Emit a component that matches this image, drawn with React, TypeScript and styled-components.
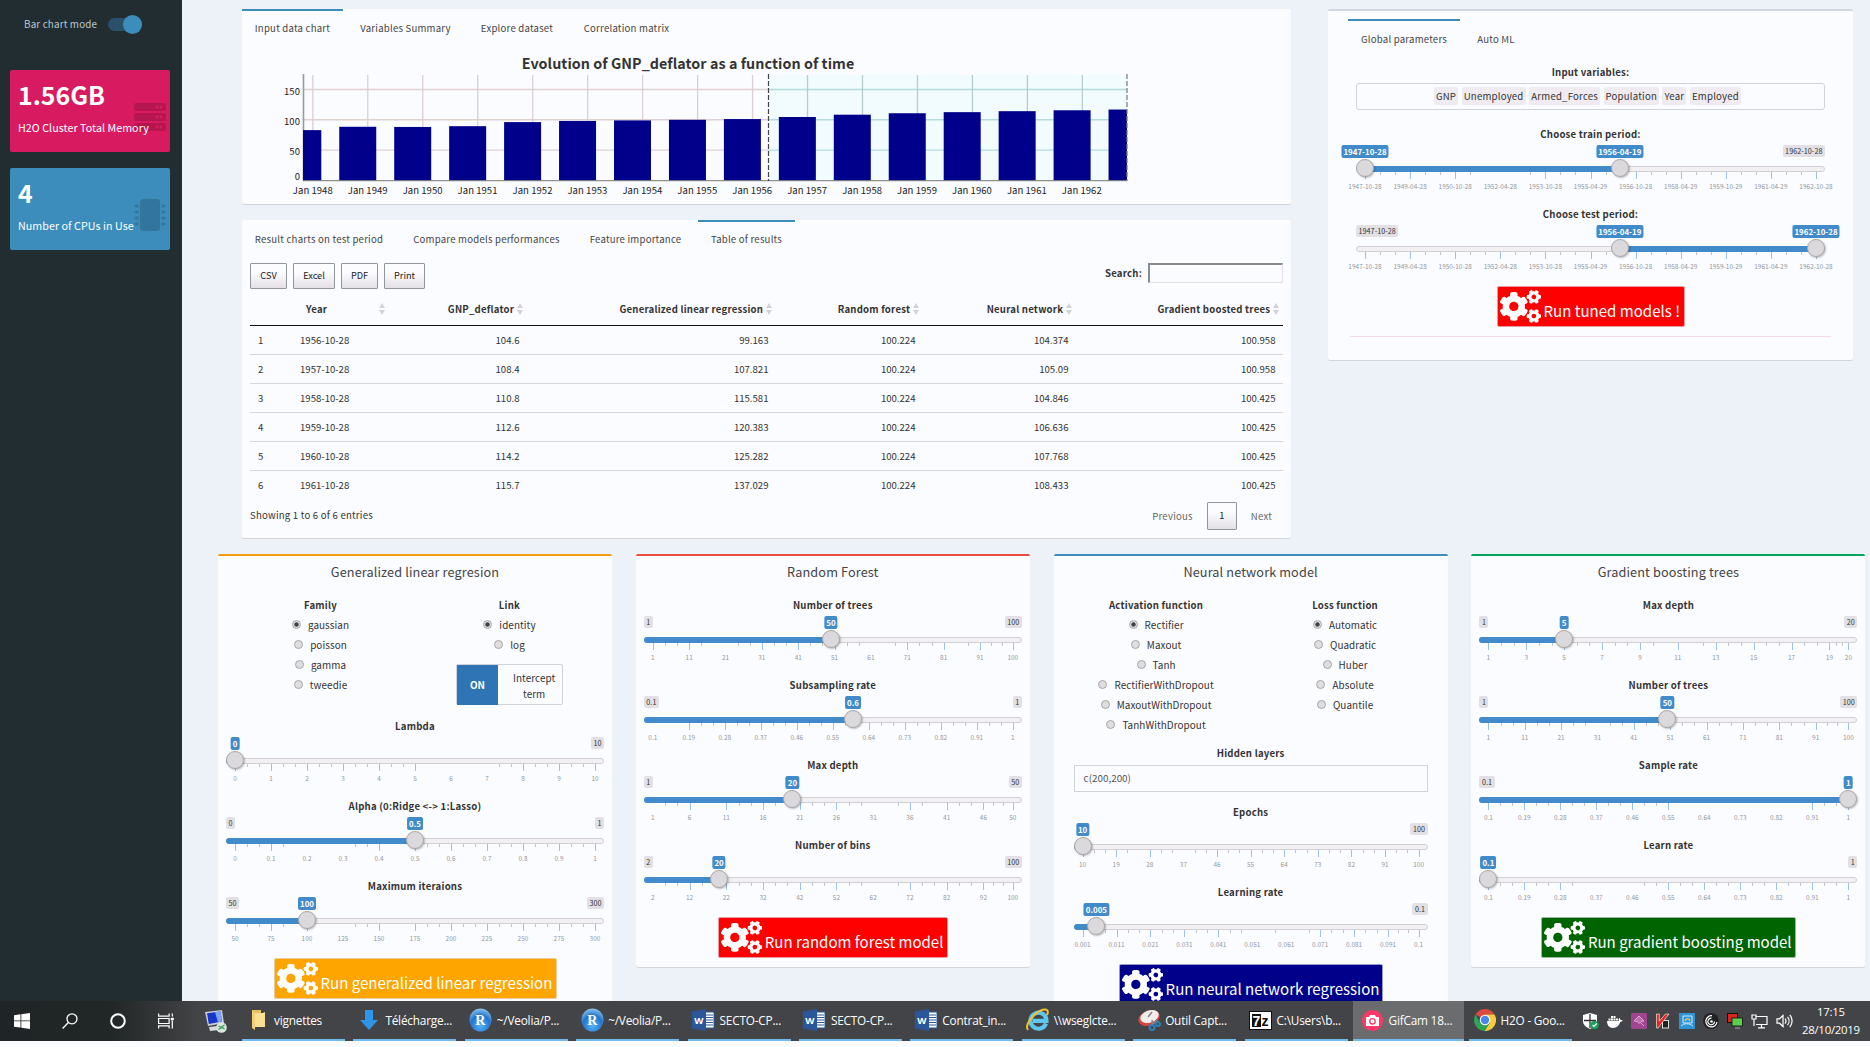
import React from 'react';
import styled, { createGlobalStyle } from 'styled-components';
import { FaCogs, FaServer, FaMicrochip } from 'react-icons/fa';

const sans = `"Noto Sans CJK SC", "Open Sans", sans-serif`;
const ui = `"Open Sans", "Noto Sans", sans-serif`;

const GlobalStyle = createGlobalStyle`
  *, *::before, *::after { box-sizing: border-box; }
  html, body { margin: 0; padding: 0; background: #fbfcff; overflow: hidden; }
  body { font-family: ${sans}; font-size: 9.6px; line-height: 15px; letter-spacing: 0.22px; color: #333; }
`;

const Screen = styled.div`
  width: 1870px;
  height: 1047px;
  overflow: hidden;
  background: #fbfcff;
`;

const Dashboard = styled.div`
  display: flex;
  height: 1001px;
  overflow: hidden;
`;

/* ---------- sidebar ---------- */

const Sidebar = styled.aside`
  width: 182px;
  flex: none;
  background: #222d32;
  padding: 15px 12px 0 10px;
  display: flex;
  flex-direction: column;
`;

const SwitchRow = styled.label`
  display: flex;
  align-items: center;
  height: 19px;
  padding-left: 14px;
  margin-bottom: 36px;
  color: #b8c7ce;
  font-size: 9.9px;
  letter-spacing: 0.14px;
  white-space: nowrap;
`;

const SwitchTrack = styled.span`
  display: flex;
  justify-content: flex-end;
  align-items: center;
  width: 34px;
  height: 13px;
  margin-left: 11px;
  border-radius: 7px;
  background: #2b506a;
`;

const SwitchKnob = styled.span`
  width: 19px;
  height: 19px;
  flex: none;
  border-radius: 50%;
  background: #3c8dbc;
`;

const ValueBox = styled.div<{ $bg: string }>`
  position: relative;
  height: 82px;
  margin-bottom: 16px;
  padding: 6px 8px;
  border-radius: 2px;
  background: ${(p) => p.$bg};
  color: #fff;
`;

const ValueNumber = styled.div`
  font-size: 24.9px;
  font-weight: 700;
  line-height: 36px;
  letter-spacing: 0;
`;

const ValueCaption = styled.div`
  margin-top: 8px;
  font-size: 10.7px;
  letter-spacing: 0.05px;
  white-space: nowrap;
  position: relative;
  z-index: 1;
`;

const ValueIcon = styled.span`
  position: absolute;
  right: 4px;
  bottom: 19px;
  display: flex;
  color: rgba(0, 0, 0, 0.16);
`;

/* ---------- main area ---------- */

const Main = styled.main`
  flex: 1;
  background: #edf1f8;
  padding-top: 9px;
`;

const TopRow = styled.div`
  display: flex;
  align-items: flex-start;
  gap: 37px;
  padding-left: 60px;
  height: 545px;
`;

const LeftColumn = styled.div`
  width: 1049px;
  display: flex;
  flex-direction: column;
  gap: 15px;
`;

const Panel = styled.section<{ $h?: number }>`
  display: flex;
  flex-direction: column;
  height: ${(p) => (p.$h ? `${p.$h}px` : 'auto')};
  background: #fbfcff;
  border-radius: 2px;
  box-shadow: inset 0 -1px 0 #d2d5da;
`;

const TabBar = styled.nav`
  display: flex;
  gap: 4px;
  height: 38px;
  flex: none;
`;

const Tab = styled.a<{ $active?: boolean; $w: number }>`
  width: ${(p) => p.$w}px;
  border-top: 2px solid ${(p) => (p.$active ? '#3c8dbc' : 'transparent')};
  padding-top: 10px;
  text-align: center;
  color: #444;
  white-space: nowrap;
`;

const TableTools = styled.div`
  display: flex;
  justify-content: space-between;
  align-items: flex-start;
  padding: 5px 8px 0;
  height: 37px;
  flex: none;
`;

const ButtonGroup = styled.div`
  display: flex;
  gap: 6px;
`;

const ToolButton = styled.button<{ $w: number; $h: number }>`
  width: ${(p) => p.$w}px;
  height: ${(p) => p.$h}px;
  padding: 0 0 1px;
  border: 1px solid #8f979c;
  border-radius: 1px;
  background: linear-gradient(#fcfcff 35%, #e4e0e6);
  font: 400 9.2px/15px ${sans};
  color: #222;
`;

const SearchLabel = styled.label`
  display: flex;
  align-items: center;
  gap: 6px;
  font-weight: 700;
`;

const SearchInput = styled.input`
  width: 135px;
  height: 20px;
  border: 1px solid #e3dfe8;
  border-top: 2px solid #858d90;
  border-left: 2px solid #858d90;
  background: #fbfcff;
`;

const Table = styled.table`
  width: 1033px;
  margin-left: 8px;
  table-layout: fixed;
  border-collapse: separate;
  border-spacing: 0;
`;

const Th = styled.th<{ $left?: boolean }>`
  position: relative;
  height: 31px;
  padding: 0 12.8px 2px 14px;
  text-align: ${(p) => (p.$left ? 'left' : 'right')};
  font-weight: 700;
  white-space: nowrap;
  border-bottom: 1px solid #111;
`;

const SortMark = styled.svg`
  position: absolute;
  right: 4.5px;
  top: 8px;
  width: 6px;
  height: 12px;
  fill: #d2d3d9;
`;

const Td = styled.td<{ $left?: boolean; $last?: boolean }>`
  height: 29px;
  padding: 0 7.5px 0 8px;
  letter-spacing: 0;
  text-align: ${(p) => (p.$left ? 'left' : 'right')};
  border-bottom: 1px solid ${(p) => (p.$last ? 'transparent' : '#d8d6db')};
`;

const TableFooter = styled.div`
  display: flex;
  justify-content: space-between;
  padding: 2px 8px 0;
  color: #333;
  line-height: 27px;
`;

const Pager = styled.div`
  display: flex;
  gap: 14px;
  padding-right: 11px;
  color: #666;
  line-height: 28px;
`;

/* ---------- parameter panel ---------- */

const ParamPanel = styled.section`
  width: 525px;
  height: 352px;
  padding: 8px 20px 0;
  background: #fbfcff;
  border-top: 2px solid #d2d6de;
  border-radius: 2px;
  box-shadow: inset 0 -1px 0 #d2d5da;

  ${Tab} { padding-top: 11px; }
`;

const ParamBody = styled.div`
  padding: 6.5px 8px 0;
`;

const FieldLabel = styled.div`
  text-align: center;
  font-weight: 700;
  line-height: 16px;
  white-space: nowrap;
`;

const ChipInput = styled.div`
  display: flex;
  justify-content: center;
  align-items: center;
  gap: 3.6px;
  height: 27px;
  margin: 3.5px 0 16px;
  padding: 0 6px 1px 0;
  border: 1px solid #d0d3d8;
  border-radius: 3px;
`;

const Chip = styled.span<{ $w: number }>`
  width: ${(p) => p.$w}px;
  height: 18px;
  border-radius: 2px;
  background: #efebf1;
  text-align: center;
  line-height: 18px;
`;

const Rule = styled.hr`
  margin: 9px -6px 0;
  border: 0;
  border-top: 1px solid #f3d9ec;
`;

/* ---------- slider ---------- */

const SliderBlock = styled.div`
  height: 80px;
`;

const SliderArea = styled.div`
  position: relative;
  padding-top: 24px;
`;

const Track = styled.div`
  height: 6px;
  border: 1px solid #d2cfd0;
  border-radius: 3px;
  background: #f3f0f3;
`;

const Rail = styled.div`
  position: absolute;
  top: 0;
  left: 9px;
  right: 9px;
  height: 60px;
`;

const Fill = styled.span<{ $single: boolean }>`
  position: absolute;
  top: 24px;
  height: 6px;
  background: #428bca;
  border-radius: ${(p) => (p.$single ? '3px 0 0 3px' : '0')};
`;

const Handle = styled.span`
  position: absolute;
  top: 17px;
  width: 18px;
  height: 18px;
  margin-left: -9px;
  border: 1px solid #a9a9a9;
  border-radius: 50%;
  background: #dcd9dc;
  box-shadow: 1px 1px 2px rgba(0, 0, 0, 0.25);
`;

const ValueBadge = styled.span`
  position: absolute;
  top: 3px;
  height: 13px;
  padding: 0 2px;
  border-radius: 2px;
  background: #428bca;
  color: #fff;
  font-size: 7.9px;
  font-weight: 700;
  line-height: 14px;
  letter-spacing: 0;
  transform: translateX(-50%);
  white-space: nowrap;
`;

const LimitBadge = styled.span<{ $side: 'left' | 'right' }>`
  position: absolute;
  top: 2.5px;
  ${(p) => p.$side}: 0;
  height: 12px;
  padding: 0 2.5px;
  border-radius: 2px;
  background: #e2e0e4;
  color: #333;
  font-size: 7.2px;
  line-height: 12px;
  letter-spacing: 0.05px;
`;

const Tick = styled.span<{ $major: boolean }>`
  position: absolute;
  top: 30px;
  width: 1px;
  height: ${(p) => (p.$major ? 7 : 3)}px;
  background: ${(p) => (p.$major ? '#9dc0e4' : '#c4c4c8')};
`;

const TickLabel = styled.span`
  position: absolute;
  top: 39px;
  font-size: 6.4px;
  line-height: 12px;
  letter-spacing: 0.05px;
  color: #8f979c;
  transform: translateX(-50%);
  white-space: nowrap;
`;

type SliderProps = {
  label: string;
  ticks: (string | number)[];
  value: string;
  at: number;
  from?: number;
  fromValue?: string;
  min?: string;
  max?: string;
  gaps?: [number, number][];
};

function Slider({ label, ticks, value, at, from, fromValue, min, max, gaps = [] }: SliderProps) {
  const numeric = ticks.every((t) => typeof t === 'number');
  const lo = Number(ticks[0]);
  const hi = Number(ticks[ticks.length - 1]);
  const pos = (i: number) =>
    numeric ? ((Number(ticks[i]) - lo) / (hi - lo)) * 100 : (i / (ticks.length - 1)) * 100;
  const marks: { t: number; x: number; major: boolean }[] = [];
  ticks.forEach((_, i) => {
    marks.push({ t: i, x: pos(i), major: true });
    if (i < ticks.length - 1) {
      const step = (pos(i + 1) - pos(i)) / 3;
      marks.push({ t: i + 1 / 3, x: pos(i) + step, major: false });
      marks.push({ t: i + 2 / 3, x: pos(i) + step * 2, major: false });
    }
  });
  const visible = marks.filter((m) => !gaps.some(([a, b]) => m.t > a && m.t < b));
  const start = from ?? 0;
  return (
    <SliderBlock>
      <FieldLabel>{label}</FieldLabel>
      <SliderArea>
        <Track />
        {min !== undefined && <LimitBadge $side="left">{min}</LimitBadge>}
        {max !== undefined && <LimitBadge $side="right">{max}</LimitBadge>}
        <Rail>
          {visible.map((m) => (
            <Tick key={m.t} $major={m.major} style={{ left: `${m.x}%` }} />
          ))}
          {ticks.map((t, i) => (
            <TickLabel key={i} style={{ left: `${pos(i)}%` }}>{t}</TickLabel>
          ))}
          <Fill
            $single={from === undefined}
            style={
              from === undefined
                ? { left: -9, width: `calc(${at}% + 9px)` }
                : { left: `${start}%`, width: `${at - start}%` }
            }
          />
          {from !== undefined && <Handle style={{ left: `${from}%` }} />}
          <Handle style={{ left: `${at}%` }} />
          {from !== undefined && <ValueBadge style={{ left: `${from}%` }}>{fromValue}</ValueBadge>}
          <ValueBadge style={{ left: `${at}%` }}>{value}</ValueBadge>
        </Rail>
      </SliderArea>
    </SliderBlock>
  );
}

/* ---------- run button ---------- */

const RunWrap = styled.div`
  display: flex;
  justify-content: center;
`;

const RunBtn = styled.button<{ $bg: string; $w: number }>`
  display: flex;
  align-items: flex-start;
  gap: 2.5px;
  width: ${(p) => p.$w}px;
  height: 41px;
  padding: 3px 0 0 2.5px;
  border: 1px solid rgba(220, 220, 230, 0.7);
  border-radius: 2px;
  background: ${(p) => p.$bg};
  color: #fff;
  font: 400 15.05px/22px ${sans};
  white-space: nowrap;

  svg { width: 41px; height: 33px; flex: none; }
  span { margin-top: 10px; }
`;

function RunButton({ bg, w, children }: { bg: string; w: number; children: string }) {
  return (
    <RunWrap>
      <RunBtn $bg={bg} $w={w}>
        <FaCogs />
        <span>{children}</span>
      </RunBtn>
    </RunWrap>
  );
}

/* ---------- model boxes ---------- */

const ModelRow = styled.div`
  display: flex;
  align-items: flex-start;
  gap: 23.8px;
  padding-left: 36px;
`;

const ModelBox = styled.section<{ $color: string; $h: number; $pad: number }>`
  width: 394px;
  flex: none;
  height: ${(p) => p.$h}px;
  padding: 0 ${(p) => p.$pad}px;
  background: #fbfcff;
  border-top: 2px solid ${(p) => p.$color};
  border-radius: 2px;
  box-shadow: inset 0 -1px 0 #d2d5da;
`;

const ModelTitle = styled.h3`
  margin: 0;
  padding-top: 6px;
  height: 41px;
  text-align: center;
  font-size: 12.7px;
  font-weight: 400;
  line-height: 20px;
  letter-spacing: 0.12px;
  color: #444;
`;

const TwoCols = styled.div<{ $h: number; $inset: number }>`
  display: grid;
  grid-template-columns: 1fr 1fr;
  height: ${(p) => p.$h}px;
  margin: 0 ${(p) => p.$inset}px;
`;

const RadioList = styled.div`
  padding-top: 2px;
`;

const RadioRow = styled.label`
  display: flex;
  justify-content: center;
  align-items: center;
  gap: 7px;
  height: 20px;
  font-size: 9.9px;
  letter-spacing: 0.08px;
`;

const Radio = styled.span<{ $on?: boolean }>`
  width: 9px;
  height: 9px;
  margin-top: -1px;
  border: 1px solid #a5a7a5;
  border-radius: 50%;
  background: ${(p) =>
    p.$on ? 'radial-gradient(circle, #444 0 1.8px, #e3e1e3 2.6px)' : '#e0dde0'};
`;

function RadioGroup({ label, options }: { label: string; options: string[] }) {
  return (
    <div>
      <FieldLabel>{label}</FieldLabel>
      <RadioList>
        {options.map((o, i) => (
          <RadioRow key={o}>
            <Radio $on={i === 0} />
            {o}
          </RadioRow>
        ))}
      </RadioList>
    </div>
  );
}

const Toggle = styled.div`
  display: grid;
  grid-template-columns: 41px 1fr;
  width: 107px;
  height: 41px;
  margin: 9px auto 0;
  border: 1px solid #d0d3d8;
  border-radius: 2px;
  text-align: center;
  font-size: 9.9px;
  line-height: 16px;
  letter-spacing: 0.08px;
`;

const ToggleOn = styled.span`
  background: #2f75b5;
  color: #fff;
  font-weight: 700;
  line-height: 40px;
`;

const ToggleText = styled.span`
  padding: 5px 15px 0;
`;

const TextField = styled.div`
  height: 27px;
  margin: 4px 0 12px;
  padding: 5px 9px;
  border: 1px solid #d0d3d8;
  color: #555;
  font-size: 9.9px;
  letter-spacing: 0;
`;

/* ---------- chart ---------- */

const ChartSvg = styled.svg`
  display: block;
  font-family: ${sans};
  font-size: 9.5px;
  letter-spacing: 0.06px;
  fill: #222;
`;

const deflator = [83, 88.5, 88.2, 89.5, 96.2, 98.1, 99, 100, 101.2, 104.6, 108.4, 110.8, 112.6, 114.2, 115.7, 116.9];

function DeflatorChart() {
  const y = (v: number) => 180.5 - v * 0.607;
  return (
    <ChartSvg width={1049} height={156} viewBox="242 47 1049 156">
      <text x={688} y={68.5} textAnchor="middle" fontSize={14.3} fontWeight={700} fill="#333">
        Evolution of GNP_deflator as a function of time
      </text>
      <rect x={768} y={75} width={359} height={106} fill="#f2fbfe" />
      {[50, 100, 150].map((v) => (
        <g key={v}>
          <line x1={303} x2={768} y1={y(v)} y2={y(v)} stroke="#e0d0d0" strokeWidth={1.4} />
          <line x1={768} x2={1127} y1={y(v)} y2={y(v)} stroke="#b5dbdc" strokeWidth={1.4} />
        </g>
      ))}
      {Array.from({ length: 15 }, (_, i) => (
        <line key={i} x1={312.8 + i * 54.97} x2={312.8 + i * 54.97} y1={75} y2={180}
          stroke={i < 9 ? '#dccfd2' : '#b4ccd0'} strokeWidth={1.3} />
      ))}
      <line x1={303.5} x2={303.5} y1={74} y2={181} stroke="#999" strokeWidth={1.6} />
      {deflator.map((v, i) => {
        const left = Math.max(303, 284.3 + i * 54.95);
        const right = Math.min(1127, 321.3 + i * 54.95);
        return <rect key={i} x={left} y={y(v)} width={right - left} height={v * 0.607} fill="#00008b" />;
      })}
      <line x1={303} x2={1127} y1={180.7} y2={180.7} stroke="#777" />
      <line x1={768.5} x2={768.5} y1={74} y2={181} stroke="#444" strokeWidth={1.2} strokeDasharray="5 2" />
      <line x1={1127} x2={1127} y1={74} y2={181} stroke="#777" strokeWidth={1.2} strokeDasharray="5 2" />
      {[[150, 95], [100, 125], [50, 155], [0, 180]].map(([v, ty]) => (
        <text key={v} x={300} y={ty} textAnchor="end">{v}</text>
      ))}
      {Array.from({ length: 15 }, (_, i) => (
        <text key={i} x={312.8 + i * 54.93} y={194} textAnchor="middle">{`Jan ${1948 + i}`}</text>
      ))}
    </ChartSvg>
  );
}

/* ---------- taskbar ---------- */

const Taskbar = styled.footer`
  display: flex;
  height: 40px;
  background: linear-gradient(90deg, #1f2526 0, #212626 110px, #434447 200px);
  color: #fff;
  font-family: ${ui};
  font-size: 12px;
`;

const SystemButtons = styled.div`
  display: flex;
  width: 242px;
  flex: none;
  align-items: center;
  padding-left: 14px;
  gap: 32px;

  svg { flex: none; }
  svg:last-child { margin-left: -2px; }
`;

const Task = styled.div<{ $active?: boolean; $gap?: number }>`
  display: flex;
  align-items: center;
  flex: none;
  width: ${(p) => (p.$active ? 111 : 103)}px;
  margin-right: ${(p) => p.$gap ?? 8.4}px;
  padding-left: ${(p) => (p.$active ? 8 : 4)}px;
  border-bottom: 2px solid #76b9ed;
  background: ${(p) => (p.$active ? '#6b6c6e' : 'transparent')};
  white-space: nowrap;
`;

const TaskIcon = styled.span`
  display: flex;
  justify-content: center;
  width: 24px;
  margin-right: 4px;
`;

const TaskText = styled.span`
  font-size: 11.8px;
  letter-spacing: -0.2px;
`;

const Tray = styled.div`
  display: flex;
  align-items: center;
  gap: 8px;
  margin-left: 3px;
  flex: none;
`;

const Clock = styled.div`
  width: 60px;
  text-align: center;
  font-size: 11.4px;
  line-height: 18px;
  letter-spacing: -0.25px;
  white-space: nowrap;
`;

const FolderIcon = () => (
  <svg width="16" height="20" viewBox="0 0 16 20">
    <path d="M2 0h9v16H2z" fill="#e9bf5c" />
    <path d="M2 1l3 2v17l-3-2z" fill="#f5cf73" />
    <path d="M5 3h8l2-1v15H5z" fill="#fbdf93" />
  </svg>
);

const DownIcon = () => (
  <svg width="18" height="20" viewBox="0 0 18 20">
    <path d="M5 0h8v10h5l-9 10L0 10h5z" fill="#2f95e8" />
  </svg>
);

const RIcon = () => (
  <svg width="23" height="24" viewBox="0 0 23 24">
    <defs>
      <radialGradient id="rball" cx="50%" cy="75%" r="75%">
        <stop offset="0" stopColor="#55b2f5" />
        <stop offset="0.6" stopColor="#2374cc" />
        <stop offset="1" stopColor="#8ec4ef" />
      </radialGradient>
    </defs>
    <ellipse cx="11.5" cy="12" rx="11" ry="11.5" fill="url(#rball)" />
    <text x="11.5" y="17" textAnchor="middle" fontFamily="Liberation Serif, serif" fontWeight="700" fontSize="14" fill="#fff">R</text>
  </svg>
);

const WordIcon = () => (
  <svg width="23" height="22" viewBox="0 0 23 22">
    <rect x="12" y="3" width="10" height="16" fill="#fff" stroke="#2b579a" />
    <path d="M14 6h7M14 8.500h7M14 11h7M14 13.500h7M14 16h7" stroke="#2b579a" strokeWidth="1" />
    <path d="M0 2.500L14 0v22L0 19.500z" fill="#2b579a" />
    <text x="7" y="14.500" textAnchor="middle" fontFamily="Open Sans, sans-serif" fontWeight="700" fontSize="9.500" fill="#fff">W</text>
  </svg>
);

const IEIcon = () => (
  <svg width="24" height="24" viewBox="0 0 24 24">
    <path d="M20 15.500A8 8 0 1 1 20.500 12.800H7" fill="none" stroke="#5fc6ee" strokeWidth="4.200" />
    <path d="M2 22C-2 17 9 3 18 1.500c4-.6 4.500 2.500 3 5.500" fill="none" stroke="#f2c231" strokeWidth="2" />
  </svg>
);

const SnipIcon = () => (
  <svg width="23" height="22" viewBox="0 0 23 22">
    <ellipse cx="11" cy="9" rx="11" ry="7.500" transform="rotate(-20 11 9)" fill="#d8453e" />
    <ellipse cx="11.500" cy="7.500" rx="9.500" ry="6" transform="rotate(-20 11.500 7.500)" fill="#f1eded" />
    <path d="M10 8l4-5M14 11l1 5M19 11l-5 5" stroke="#8d8486" strokeWidth="1.500" />
    <circle cx="14" cy="18.500" r="2.500" fill="none" stroke="#2f7fb8" strokeWidth="2" />
    <circle cx="20" cy="15" r="2" fill="none" stroke="#2f7fb8" strokeWidth="2" />
  </svg>
);

const SevenZipIcon = () => (
  <svg width="23" height="19" viewBox="0 0 23 19">
    <rect x="0.500" y="0.500" width="22" height="18" fill="#fff" stroke="#111" />
    <rect x="3" y="3" width="17" height="13" fill="#111" />
    <rect x="12" y="3" width="8.500" height="13" fill="#fff" />
    <text x="3.500" y="14.500" fontFamily="Liberation Sans, sans-serif" fontWeight="700" fontSize="14" fill="#fff">7</text>
    <text x="12.500" y="15" fontFamily="Liberation Sans, sans-serif" fontWeight="700" fontSize="14" fill="#111">z</text>
  </svg>
);

const GifCamIcon = () => (
  <svg width="21" height="21" viewBox="0 0 21 21">
    <circle cx="10.500" cy="10.500" r="10.500" fill="#fb3868" />
    <path d="M4 7h3l1-2h5l1 2h3v9H4z" fill="#fff" />
    <circle cx="10.500" cy="11.300" r="2.700" fill="none" stroke="#fb3868" strokeWidth="1.300" />
  </svg>
);

const ChromeIcon = () => (
  <svg width="22" height="22" viewBox="0 0 22 22">
    <path d="M11 11L1.500 5.500A11 11 0 0 1 20.500 5.500L11 5.500z" fill="#dd4b3e" />
    <path d="M20.500 5.500A11 11 0 0 1 10.500 22L15.800 13.700L11 5.500z" fill="#fbcb3e" />
    <path d="M1.500 5.500A11 11 0 0 0 10.500 22L15.800 13.700L6.200 13.700z" fill="#2fa455" />
    <circle cx="11" cy="11" r="5.300" fill="#fff" />
    <circle cx="11" cy="11" r="4.200" fill="#4a88e8" />
  </svg>
);

const StartGlyph = () => (
  <svg width="16" height="16" viewBox="0 0 16 16" fill="#fff">
    <path d="M0 2.200L6.500 1.300V7.500H0zM7.300 1.200L16 0v7.500H7.300zM0 8.300h6.500v6.200L0 13.700zM7.300 8.300H16V16l-8.700-1.300z" />
  </svg>
);

const SearchGlyph = () => (
  <svg width="16" height="16" viewBox="0 0 16 16" fill="none" stroke="#fff" strokeWidth="1.300">
    <circle cx="10" cy="5.800" r="5" />
    <path d="M6.400 9.500L.6 15.500" />
  </svg>
);

const CortanaGlyph = () => (
  <svg width="16" height="16" viewBox="0 0 16 16" fill="none" stroke="#fff" strokeWidth="2">
    <circle cx="8" cy="8" r="6.800" />
  </svg>
);

const TaskViewGlyph = () => (
  <svg width="16" height="16" viewBox="0 0 16 16" fill="none" stroke="#fff" strokeWidth="1.200">
    <path d="M.6 .5v2.600h10.500V.5M.6 15.500v-2.600h10.500v2.600M.6 5.500h10.500v5H.6zM14.300 .5v3M14.300 7.500v8" />
    <path d="M13 5h2.600v2H13z" fill="#fff" strokeWidth="0.500" />
  </svg>
);

const RemoteGlyph = () => (
  <svg width="23" height="23" viewBox="0 0 23 23">
    <path d="M1 2l17-2 2 13-16 3z" fill="#c9cdd8" />
    <path d="M3 3.200l13.500-1.600 1.500 10L4.800 14z" fill="#1536c9" />
    <path d="M11 2.200l5.500-.6 1.500 10-4 .7z" fill="#7fa4ee" />
    <path d="M5 17l9-1 1 4-9 1z" fill="#d7d9df" />
    <circle cx="17.500" cy="17.500" r="5.300" fill="#d9e6dc" />
    <path d="M14.500 16l3 1.500-3 2M20.500 15l-3 2 3 2" stroke="#3f9c56" strokeWidth="1.300" fill="none" />
  </svg>
);

const ShieldGlyph = () => (
  <svg width="16" height="17" viewBox="0 0 16 17">
    <path d="M7 0l7 2v6c0 4-3 6-7 8-4-2-7-4-7-8V2z" fill="#fff" />
    <path d="M7 1v14M1 7.500h12" stroke="#333" strokeWidth="1.300" />
    <circle cx="11.500" cy="12" r="4.300" fill="#16a05a" />
    <path d="M9.500 12l1.500 1.500 2.700-3" stroke="#fff" fill="none" strokeWidth="1.200" />
  </svg>
);

const DockerGlyph = () => (
  <svg width="16" height="13" viewBox="0 0 16 13" fill="#fff">
    <path d="M0 6h12c-.6-1-.4-2.200.3-3 .9.500 1.200 1.300 1.200 2 .9-.2 1.700 0 2.300.5-.5 1-1.500 1.300-2.500 1.300C12 11 9.500 13 6 13 2 13 0 10 0 6z" />
    <path d="M1.500 3.500h2v2h-2zM4 3.500h2v2H4zM6.500 3.500h2v2h-2zM9 3.500h2v2H9zM4 1h2v2H4zM6.500 1h2v2h-2z" />
  </svg>
);

const PurpleGlyph = () => (
  <svg width="16" height="16" viewBox="0 0 16 16">
    <rect width="16" height="16" rx="1.500" fill="#a14590" />
    <path d="M3 8l5-5 5 5-3 .5-2 2-1.500-2zM9 9l4 4" stroke="#dca6d2" fill="#bd6fae" />
  </svg>
);

const KasperskyGlyph = () => (
  <svg width="16" height="16" viewBox="0 0 16 16">
    <rect x="7.500" y="7.500" width="6" height="7.500" fill="#222" stroke="#ddd" />
    <path d="M1.500 1h2.800v7L10.500 1H14L4.500 13l-1 2h-2z" fill="#e22a24" stroke="#fff" strokeWidth="0.600" />
  </svg>
);

const BlueGlyph = () => (
  <svg width="16" height="16" viewBox="0 0 16 16">
    <rect width="16" height="16" fill="#2f94d6" />
    <path d="M4 3h9v7H4zM2 13c3-3 8-3 12 0" stroke="#cfe8f8" fill="none" />
    <path d="M6 8c1-3 4-3 5 0" stroke="#e3c268" fill="none" strokeWidth="1.500" />
  </svg>
);

const SpiralGlyph = () => (
  <svg width="16" height="16" viewBox="0 0 16 16">
    <circle cx="8" cy="8" r="8" fill="#222" />
    <circle cx="8.500" cy="8.500" r="1.300" fill="#fff" />
    <path d="M11.500 8.500a3.300 3.300 0 1 1-3-3.300M14 9a5.600 5.600 0 1 1-5-6.300" stroke="#fff" fill="none" strokeWidth="1.200" />
  </svg>
);

const MonitorsGlyph = () => (
  <svg width="16" height="16" viewBox="0 0 16 16">
    <rect x="0.500" y="0.500" width="10" height="9" fill="#d8261f" stroke="#111" />
    <rect x="5" y="5" width="10.500" height="8" fill="#5ad04b" stroke="#222" />
    <path d="M8 15h5" stroke="#888" strokeWidth="1.500" />
  </svg>
);

const NetworkGlyph = () => (
  <svg width="17" height="16" viewBox="0 0 17 16" fill="none" stroke="#fff" strokeWidth="1.200">
    <path d="M5 3.500h11v8H5M10.500 12v2.500M7 14.800h7" />
    <path d="M1 2h4v4H1zM3 6v7" />
  </svg>
);

const SpeakerGlyph = () => (
  <svg width="17" height="14" viewBox="0 0 17 14" fill="none" stroke="#fff" strokeWidth="1.200">
    <path d="M1 4.800h2.500L7 1.500v11L3.500 9.200H1z" />
    <path d="M9 4.500a4 4 0 0 1 0 5M11.500 2.800a6.500 6.500 0 0 1 0 8.400M13.800 1a9 9 0 0 1 0 12" />
  </svg>
);

const tasks: { icon: React.ReactNode; text: string; active?: boolean; gap?: number }[] = [
  { icon: <FolderIcon />, text: 'vignettes' },
  { icon: <DownIcon />, text: 'Télécharge...' },
  { icon: <RIcon />, text: '~/Veolia/P...' },
  { icon: <RIcon />, text: '~/Veolia/P...' },
  { icon: <WordIcon />, text: 'SECTO-CP...' },
  { icon: <WordIcon />, text: 'SECTO-CP...' },
  { icon: <WordIcon />, text: 'Contrat_in...' },
  { icon: <IEIcon />, text: '\\\\wseglcte...' },
  { icon: <SnipIcon />, text: 'Outil Capt...' },
  { icon: <SevenZipIcon />, text: 'C:\\Users\\b...', gap: 5 },
  { icon: <GifCamIcon />, text: 'GifCam 18...', active: true, gap: 5 },
  { icon: <ChromeIcon />, text: 'H2O - Goo...' },
];

/* ---------- data ---------- */

const columns = ['GNP_deflator', 'Generalized linear regression', 'Random forest', 'Neural network', 'Gradient boosted trees'];
const colWidths = [42, 97, 138, 249, 147, 153, 207];
const rows = [
  ['1', '1956-10-28', '104.6', '99.163', '100.224', '104.374', '100.958'],
  ['2', '1957-10-28', '108.4', '107.821', '100.224', '105.09', '100.958'],
  ['3', '1958-10-28', '110.8', '115.581', '100.224', '104.846', '100.425'],
  ['4', '1959-10-28', '112.6', '120.383', '100.224', '106.636', '100.425'],
  ['5', '1960-10-28', '114.2', '125.282', '100.224', '107.768', '100.425'],
  ['6', '1961-10-28', '115.7', '137.029', '100.224', '108.433', '100.425'],
];
const dates = ['1947-10-28', '1949-04-28', '1950-10-28', '1952-04-28', '1953-10-28', '1955-04-29', '1956-10-28', '1958-04-29', '1959-10-29', '1961-04-29', '1962-10-28'];
const rateTicks = [0.1, 0.19, 0.28, 0.37, 0.46, 0.55, 0.64, 0.73, 0.82, 0.91, 1];
const hundredTicks = [1, 11, 21, 31, 41, 51, 61, 71, 81, 91, 100];

const Sort = () => (
  <SortMark viewBox="0 0 6 12">
    <path d="M0 5l3-5 3 5zM0 7h6l-3 5z" />
  </SortMark>
);

export default function App() {
  return (
    <Screen>
      <GlobalStyle />
      <Dashboard>
        <Sidebar>
          <SwitchRow>
            Bar chart mode
            <SwitchTrack><SwitchKnob /></SwitchTrack>
          </SwitchRow>
          <ValueBox $bg="#d81b60">
            <ValueNumber>1.56GB</ValueNumber>
            <ValueCaption>H2O Cluster Total Memory</ValueCaption>
            <ValueIcon><FaServer size={32} /></ValueIcon>
          </ValueBox>
          <ValueBox $bg="#3c8dbc">
            <ValueNumber>4</ValueNumber>
            <ValueCaption>Number of CPUs in Use</ValueCaption>
            <ValueIcon><FaMicrochip size={32} /></ValueIcon>
          </ValueBox>
        </Sidebar>

        <Main>
          <TopRow>
            <LeftColumn>
              <Panel $h={196}>
                <TabBar>
                  <Tab $active $w={101}>Input data chart</Tab>
                  <Tab $w={117}>Variables Summary</Tab>
                  <Tab $w={98}>Explore dataset</Tab>
                  <Tab $w={113}>Correlation matrix</Tab>
                </TabBar>
                <DeflatorChart />
              </Panel>
              <Panel $h={319}>
                <TabBar>
                  <Tab $w={154}>Result charts on test period</Tab>
                  <Tab $w={173}>Compare models performances</Tab>
                  <Tab $w={117}>Feature importance</Tab>
                  <Tab $active $w={97}>Table of results</Tab>
                </TabBar>
                <TableTools>
                  <ButtonGroup>
                    <ToolButton $w={37} $h={26}>CSV</ToolButton>
                    <ToolButton $w={42} $h={26}>Excel</ToolButton>
                    <ToolButton $w={37} $h={26}>PDF</ToolButton>
                    <ToolButton $w={41} $h={26}>Print</ToolButton>
                  </ButtonGroup>
                  <SearchLabel>Search:<SearchInput /></SearchLabel>
                </TableTools>
                <Table>
                  <colgroup>
                    {colWidths.map((w, i) => <col key={i} width={w} />)}
                  </colgroup>
                  <thead>
                    <tr>
                      <Th />
                      <Th $left>Year<Sort /></Th>
                      {columns.map((c) => <Th key={c}>{c}<Sort /></Th>)}
                    </tr>
                  </thead>
                  <tbody>
                    {rows.map((r, ri) => (
                      <tr key={r[0]}>
                        {r.map((c, ci) => (
                          <Td key={ci} $left={ci < 2} $last={ri === rows.length - 1}>{c}</Td>
                        ))}
                      </tr>
                    ))}
                  </tbody>
                </Table>
                <TableFooter>
                  <span>Showing 1 to 6 of 6 entries</span>
                  <Pager>
                    <span>Previous</span>
                    <ToolButton $w={30} $h={28}>1</ToolButton>
                    <span>Next</span>
                  </Pager>
                </TableFooter>
              </Panel>
            </LeftColumn>

            <ParamPanel>
              <TabBar>
                <Tab $active $w={112}>Global parameters</Tab>
                <Tab $w={64}>Auto ML</Tab>
              </TabBar>
              <ParamBody>
                <FieldLabel>Input variables:</FieldLabel>
                <ChipInput>
                  <Chip $w={24}>GNP</Chip>
                  <Chip $w={64}>Unemployed</Chip>
                  <Chip $w={71}>Armed_Forces</Chip>
                  <Chip $w={55}>Population</Chip>
                  <Chip $w={24}>Year</Chip>
                  <Chip $w={51}>Employed</Chip>
                </ChipInput>
                <Slider label="Choose train period:" ticks={dates} from={0} fromValue="1947-10-28" at={56.5}
                  value="1956-04-19" max="1962-10-28" gaps={[[2.5, 3.5]]} />
                <Slider label="Choose test period:" ticks={dates} from={56.5} fromValue="1956-04-19" at={100}
                  value="1962-10-28" min="1947-10-28" />
                <RunButton bg="#ff0000" w={188}>Run tuned models !</RunButton>
                <Rule />
              </ParamBody>
            </ParamPanel>
          </TopRow>

          <ModelRow>
            <ModelBox $color="#f39c12" $h={480} $pad={8}>
              <ModelTitle>Generalized linear regresion</ModelTitle>
              <TwoCols $h={121} $inset={0}>
                <RadioGroup label="Family" options={['gaussian', 'poisson', 'gamma', 'tweedie']} />
                <div>
                  <RadioGroup label="Link" options={['identity', 'log']} />
                  <Toggle>
                    <ToggleOn>ON</ToggleOn>
                    <ToggleText>Intercept term</ToggleText>
                  </Toggle>
                </div>
              </TwoCols>
              <Slider label="Lambda" ticks={[0, 1, 2, 3, 4, 5, 6, 7, 8, 9, 10]} at={0} value="0" max="10" gaps={[[5.1, 7.2]]} />
              <Slider label="Alpha (0:Ridge <-> 1:Lasso)" ticks={[0, 0.1, 0.2, 0.3, 0.4, 0.5, 0.6, 0.7, 0.8, 0.9, 1]} at={50}
                value="0.5" min="0" max="1" gaps={[[1.4, 3.2], [4.1, 4.9]]} />
              <Slider label="Maximum iteraions" ticks={[50, 75, 100, 125, 150, 175, 200, 225, 250, 275, 300]} at={20}
                value="100" min="50" max="300" gaps={[[1.4, 1.9], [2.1, 3.2], [4.1, 4.9]]} />
              <RunButton bg="#ffa500" w={283}>Run generalized linear regression</RunButton>
            </ModelBox>

            <ModelBox $color="#e84c3d" $h={414} $pad={8}>
              <ModelTitle>Random Forest</ModelTitle>
              <Slider label="Number of trees" ticks={hundredTicks} at={49.5} value="50" min="1" max="100"
                gaps={[[1.4, 2.2], [5.8, 6.5], [8.1, 8.5]]} />
              <Slider label="Subsampling rate" ticks={rateTicks} at={55.6} value="0.6" min="0.1" max="1" gaps={[[-1, 0.9]]} />
              <Slider label="Max depth" ticks={[1, 6, 11, 16, 21, 26, 31, 36, 41, 46, 50]} at={38.8} value="20" min="1" max="50"
                gaps={[[-1, 0.2], [1.1, 1.9], [5.8, 6.5], [7.4, 7.9]]} />
              <Slider label="Number of bins" ticks={[2, 12, 22, 32, 42, 52, 62, 72, 82, 92, 100]} at={18.4} value="20" min="2" max="100"
                gaps={[[-1, 0.2], [5.8, 6.5]]} />
              <RunButton bg="#ff0000" w={230}>Run random forest model</RunButton>
            </ModelBox>

            <ModelBox $color="#3c8dbc" $h={480} $pad={20}>
              <ModelTitle>Neural network model</ModelTitle>
              <TwoCols $h={148} $inset={-12}>
                <RadioGroup label="Activation function"
                  options={['Rectifier', 'Maxout', 'Tanh', 'RectifierWithDropout', 'MaxoutWithDropout', 'TanhWithDropout']} />
                <RadioGroup label="Loss function" options={['Automatic', 'Quadratic', 'Huber', 'Absolute', 'Quantile']} />
              </TwoCols>
              <FieldLabel>Hidden layers</FieldLabel>
              <TextField>c(200,200)</TextField>
              <Slider label="Epochs" ticks={[10, 19, 28, 37, 46, 55, 64, 73, 82, 91, 100]} at={0} value="10" max="100"
                gaps={[[1.4, 1.9], [2.7, 3.2]]} />
              <Slider label="Learning rate" ticks={[0.001, 0.011, 0.021, 0.031, 0.041, 0.051, 0.061, 0.071, 0.081, 0.091, 0.1]}
                at={4.1} value="0.005" max="0.1" gaps={[[4.8, 5.5], [5.8, 6.5]]} />
              <RunButton bg="#00008b" w={264}>Run neural network regression</RunButton>
            </ModelBox>

            <ModelBox $color="#00a65a" $h={414} $pad={8}>
              <ModelTitle>Gradient boosting trees</ModelTitle>
              <Slider label="Max depth" ticks={[1, 3, 5, 7, 9, 11, 13, 15, 17, 19, 20]} at={21} value="5" min="1" max="20"
                gaps={[[4.4, 4.9], [5.1, 5.6]]} />
              <Slider label="Number of trees" ticks={hundredTicks} at={49.7} value="50" min="1" max="100" gaps={[[2.8, 3.2]]} />
              <Slider label="Sample rate" ticks={rateTicks} at={100} value="1" min="0.1" gaps={[[5.1, 8.9]]} />
              <Slider label="Learn rate" ticks={rateTicks} at={0} value="0.1" max="1" gaps={[[2.4, 4.2]]} />
              <RunButton bg="#006400" w={255}>Run gradient boosting model</RunButton>
            </ModelBox>
          </ModelRow>
        </Main>
      </Dashboard>

      <Taskbar>
        <SystemButtons>
          <StartGlyph />
          <SearchGlyph />
          <CortanaGlyph />
          <TaskViewGlyph />
          <RemoteGlyph />
        </SystemButtons>
        {tasks.map((t, i) => (
          <Task key={i} $active={t.active} $gap={t.gap}>
            <TaskIcon>{t.icon}</TaskIcon>
            <TaskText>{t.text}</TaskText>
          </Task>
        ))}
        <Tray>
          <ShieldGlyph />
          <DockerGlyph />
          <PurpleGlyph />
          <KasperskyGlyph />
          <BlueGlyph />
          <SpiralGlyph />
          <MonitorsGlyph />
          <NetworkGlyph />
          <SpeakerGlyph />
          <Clock>17:15<br />28/10/2019</Clock>
        </Tray>
      </Taskbar>
    </Screen>
  );
}
